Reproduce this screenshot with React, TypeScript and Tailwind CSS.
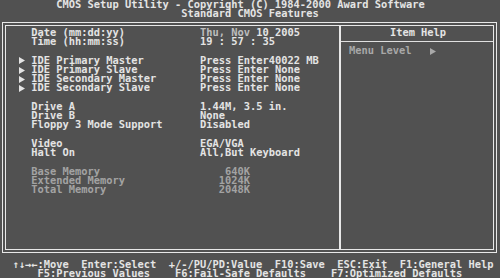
import React from 'react'

// one text cell = 6.25px wide, one text row = 9.27px high
const ROW = 'h-[9.27px] leading-[9.27px] whitespace-pre'

type Item = {
  label?: string
  value?: React.ReactNode
  sub?: boolean
  dim?: boolean
  right?: boolean
}

const ITEMS: Item[] = [
  { label: 'Date (mm:dd:yy)', value: <><span className="text-[#bdbdbd]">Thu, Nov</span> 10 2005</> },
  { label: 'Time (hh:mm:ss)', value: '19 : 57 : 35' },
  {},
  { label: 'IDE Primary Master', value: 'Press Enter40022 MB', sub: true },
  { label: 'IDE Primary Slave', value: 'Press Enter None', sub: true },
  { label: 'IDE Secondary Master', value: 'Press Enter None', sub: true },
  { label: 'IDE Secondary Slave', value: 'Press Enter None', sub: true },
  {},
  { label: 'Drive A', value: '1.44M, 3.5 in.' },
  { label: 'Drive B', value: 'None' },
  { label: 'Floppy 3 Mode Support', value: 'Disabled' },
  {},
  { label: 'Video', value: 'EGA/VGA' },
  { label: 'Halt On', value: 'All,But Keyboard' },
  {},
  { label: 'Base Memory', value: '640K', dim: true, right: true },
  { label: 'Extended Memory', value: '1024K', dim: true, right: true },
  { label: 'Total Memory', value: '2048K', dim: true, right: true },
]

function Arrow() {
  return (
    <svg width="6" height="7" viewBox="0 0 6 7" className="mt-[1px]">
      <path d="M0 0 L6 3.5 L0 7 Z" fill="currentColor" />
    </svg>
  )
}

export default function App() {
  return (
    <div
      className="w-[500px] h-[278px] overflow-hidden bg-[#515151] text-[#e4e4e4] font-bold text-[10.38px]"
      style={{ fontFamily: '"DejaVu Sans Mono", "Liberation Mono", monospace' }}
    >
      {/* title */}
      <div className={`${ROW} pl-[56.25px]`}>CMOS Setup Utility - Copyright (C) 1984-2000 Award Software</div>
      <div className={`${ROW} pl-[181.25px]`}>Standard CMOS Features</div>

      {/* main box */}
      <div className="mt-[3.5px] ml-[2px] w-[495px] h-[231px] border-[4px] border-double border-[#e8e8e8] flex">
        <div className="w-[333px] pt-[1.8px]">
          {ITEMS.map((it, i) => (
            <div key={i} className={`${ROW} flex items-center ${it.dim ? 'text-[#a3a3a3]' : ''}`}>
              <div className="w-[12.75px] shrink-0" />
              <div className="w-[12.5px] shrink-0 flex items-center">{it.sub && <Arrow />}</div>
              <div className="w-[168.75px] shrink-0">{it.label}</div>
              <div className={it.right ? 'w-[50px] text-right' : ''}>{it.value}</div>
            </div>
          ))}
        </div>
        <div className="w-[2px] bg-[#e8e8e8]" />
        <div className="flex-1 pt-[1.8px]">
          <div className={`${ROW} text-center pl-[2px]`}>Item Help</div>
          <div className="h-[9.27px] flex items-center">
            <div className="w-full h-[1.5px] bg-[#e0e0e0]" />
          </div>
          <div className={`${ROW} flex items-center text-[#a8a8a8] pl-[8px]`}>
            <span className="w-[81.25px]">Menu Level</span>
            <Arrow />
          </div>
        </div>
      </div>

      {/* key help */}
      <div className="pt-[6.5px]">
        <div className={`${ROW} pl-[12.5px]`}>↑↓→←:Move  Enter:Select  +/-/PU/PD:Value  F10:Save  ESC:Exit  F1:General Help</div>
        <div className={`${ROW} pl-[37.5px]`}>F5:Previous Values    F6:Fail-Safe Defaults    F7:Optimized Defaults</div>
      </div>
    </div>
  )
}
